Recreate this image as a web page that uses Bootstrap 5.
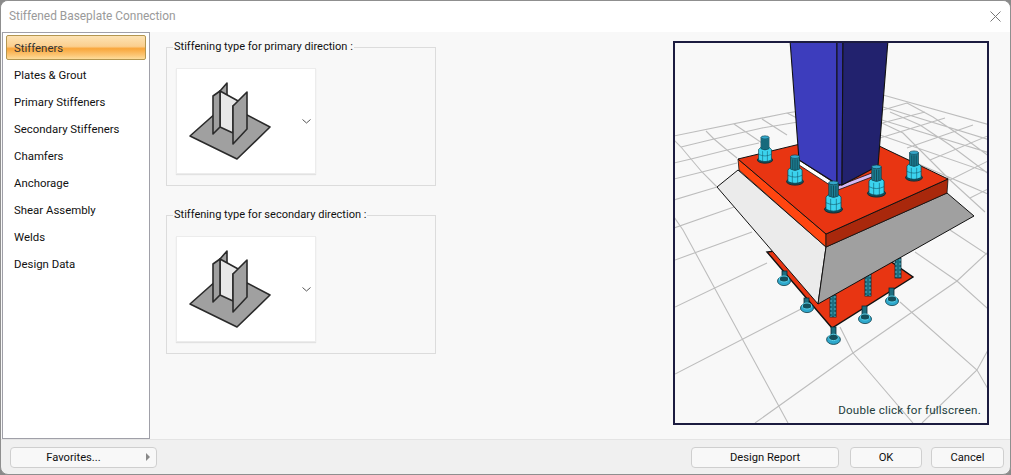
<!DOCTYPE html>
<html lang="en">
<head>
  <meta charset="UTF-8">
  <title>Stiffened Baseplate Connection</title>
  <link href="https://cdn.jsdelivr.net/npm/bootstrap@5.3.0/dist/css/bootstrap.min.css" rel="stylesheet">
  <style>
    html, body { height: 475px; overflow: hidden; background: #8a8a8a; }
    body { font-family: Roboto, "Liberation Sans", sans-serif; font-size: 11.4px; color: #111; }
    .dlg { height: 475px; background: #f0f0f0; border: 1px solid #8f8f8f; border-radius: 8px; overflow: hidden; }
    .dlg-title { height: 31px; background: #fff; padding-left: 8px; color: #9a9a9a; font-size: 11.9px; }
    .dlg-close { width: 30px; }
    .dlg-body { height: 407px; background: #f8f8f8; }
    .side { width: 148px; margin-left: 1px; background: #fff; border: 1px solid #a0a0a8; padding: 2px 3px; }
    .side .list-group-item { height: 25px; margin-bottom: 2px; padding: 0 7px; line-height: 24px; border: 1px solid transparent; background: none; color: #111; border-radius: 2px; }
    .side .list-group-item.active { border-color: #b49650; color: #333; background: linear-gradient(#fde3b4 0%, #fbcf8f 45%, #f9a63b 55%, #fcc878 85%, #fedd9c 100%); }
    .mid { width: 270px; margin-left: 16px; padding-top: 8px; }
    .grp { height: 146px; border: 1px solid #dcdcdc; margin: 0 0 22px; padding: 0 9px; min-inline-size: 0; }
    .grp legend { float: none; width: auto; font-size: 11.05px; margin: 0 0 0 -3px; padding: 0 1px; line-height: 14px; color: #111; }
    .pick { width: 140px; height: 106px; margin-top: 14px; background: #fff; border: 1px solid #ececec; box-shadow: 0 1px 1px #e2e2e2; padding-right: 4px; }
    .view { position: relative; width: 316px; height: 384px; margin: 9px 21px 0 auto; border: 2px solid #1c1c40; background: #f8f8f8; }
    .view svg { display: block; }
    .view-hint { position: absolute; right: 6px; bottom: 6px; color: #223c3c; font-size: 11.6px; line-height: 14px; letter-spacing: .22px; }
    .foot { height: 35px; border-top: 1px solid #e4e4e4; padding: 7px 6px 0 9px; }
    .foot .btn { height: 21px; padding: 0; font-size: 11.2px; line-height: 18px; color: #111; background: #f8f8f8; border: 1px solid #cfcfcf; border-radius: 4px; }
    .foot .btn-fav { width: 147px; padding-right: 20px; }
    .btn-fav i { border-left: 4px solid #888; border-top: 4px solid transparent; border-bottom: 4px solid transparent; right: 6px; top: 5px; position: absolute; }
    .btn-rep { width: 148px; margin-right: 11px; }
    .btn-ok { width: 72px; margin-right: 9px; }
    .btn-can { width: 73px; }
  </style>
</head>
<body>

<svg width="0" height="0" class="position-absolute">
  <symbol id="stiff" viewBox="0 0 106 106">
    <g stroke="#2a2a2a" stroke-width="1.6" stroke-linejoin="round">
      <polygon points="13,68 49,36 93,59 60,91" fill="#a0a0a0"/>
      <polygon points="43,23 50,15 50,36 43,42" fill="#a0a0a0"/>
      <polygon points="43,23 63,34 56,38 56,65 43,59" fill="#e8e8e8"/>
      <polygon points="36,28 43,23 43,59 36,66" fill="#a0a0a0"/>
      <polygon points="56,38 70,24 70,61 56,76" fill="#a0a0a0"/>
    </g>
  </symbol>
  <!-- anchor bolt: nut and stud, origin at base centre -->
  <symbol id="bolt" viewBox="-10 -33 20 36" overflow="visible">
    <ellipse cx="0" cy="-2" rx="9.5" ry="4" fill="#14505c" stroke="#0b2a33"/>
    <path d="M-8-15l3-3h10l3 3v13q-8 4-16 0z" fill="#3bd3ee" stroke="#0e3c48" stroke-width=".8"/>
    <path d="M-8-9q8 4 16 0M-3-13v14M3-13v14" fill="none" stroke="#0e5060" stroke-width=".6"/>
    <path d="M-5-30v14q5 3 10 0v-14z" fill="#1d7f94" stroke="#0e3c48" stroke-width=".8"/>
    <ellipse cx="0" cy="-30" rx="5" ry="2" fill="#35a9cc" stroke="#0e3c48" stroke-width=".7"/>
    <path d="M-2.5-27v11M0-27v12M2.5-27v11" stroke="#0c3540" stroke-width=".7"/>
  </symbol>
  <symbol id="nutlow" viewBox="-8 -6 16 13" overflow="visible">
    <ellipse cx="0" cy="1" rx="6.5" ry="4.6" fill="#2ea8cc" stroke="#0e3c48" stroke-width=".8"/>
    <ellipse cx="0" cy="-1" rx="4.6" ry="3" fill="#14505c" stroke="#5fd8f0" stroke-width=".9"/>
  </symbol>
</svg>

<div class="dlg d-flex flex-column">
  <div class="dlg-title d-flex align-items-center justify-content-between">
    <span>Stiffened Baseplate Connection</span>
    <span class="dlg-close d-flex justify-content-center">
      <svg width="11" height="11" viewBox="0 0 11 11"><path d="M.5.5l10 10M10.5.5l-10 10" stroke="#777" fill="none"/></svg>
    </span>
  </div>

  <div class="dlg-body d-flex">
    <div class="side list-group list-group-flush">
      <div class="list-group-item active">Stiffeners</div>
      <div class="list-group-item">Plates &amp; Grout</div>
      <div class="list-group-item">Primary Stiffeners</div>
      <div class="list-group-item">Secondary Stiffeners</div>
      <div class="list-group-item">Chamfers</div>
      <div class="list-group-item">Anchorage</div>
      <div class="list-group-item">Shear Assembly</div>
      <div class="list-group-item">Welds</div>
      <div class="list-group-item">Design Data</div>
    </div>

    <div class="mid">
      <fieldset class="grp">
        <legend>Stiffening type for primary direction :</legend>
        <div class="pick d-flex align-items-center">
          <svg width="106" height="106"><use href="#stiff"/></svg>
          <svg class="ms-auto" width="9" height="5" viewBox="0 0 9 5"><path d="M.5.5l4 3.5 4-3.5" fill="none" stroke="#555"/></svg>
        </div>
      </fieldset>
      <fieldset class="grp">
        <legend>Stiffening type for secondary direction :</legend>
        <div class="pick d-flex align-items-center">
          <svg width="106" height="106"><use href="#stiff"/></svg>
          <svg class="ms-auto" width="9" height="5" viewBox="0 0 9 5"><path d="M.5.5l4 3.5 4-3.5" fill="none" stroke="#555"/></svg>
        </div>
      </fieldset>
    </div>

    <div class="view">
      <svg width="312" height="380" viewBox="675 43 312 380">
        <path fill="none" stroke="#bdbdbd" stroke-width="1.1" d="
          M674 136L787 113L800 111M681 147L714 139L762 128L798 122M674 163L691 159L727 150L759 143M674 179L702 172L737 163M674 200L717 187M674 228L734 207
          M674 140L681 147L691 159L702 172L717 187M706 131L714 139L727 150L737 158M734 124L762 143M762 119L787 135M787 113L797 118
          M675 260L752 232M675 307L767 263M675 374L803 308
          M755 423L853 353L957 281L988 252M922 423L977 370L988 350
          M674 217L683 230L788 423M840 327L853 353L913 423M900 302L977 370L988 389M915 252L957 281L988 309M950 230L988 255
          M883 95L990 125M883 107L990 140M882 120L990 153M880 135L990 173M879 147L990 195
          M883 110L907 103M882 123L925 112M880 138L945 118M907 148L973 125M930 160L990 135M950 180L990 160M970 198L990 188
          M907 103L933 117L967 140L990 157M890 112L920 125L950 145L990 175M882 123L903 133L930 160L950 180L985 212"/>
        <!-- lower plate -->
        <polygon points="767,252 832,328 913,277 860,240" fill="#e83512" stroke="#111" stroke-width="1.4"/>
        <g fill="#1d6f80" stroke="#0b2a33" stroke-width=".8">
          <rect x="830" y="295" width="6" height="22"/>
          <rect x="865" y="274" width="6" height="22"/>
          <rect x="895" y="258" width="6" height="20"/>
          <rect x="831" y="327" width="5" height="12"/>
          <rect x="862" y="306" width="5" height="13"/>
          <rect x="889" y="288" width="5" height="13"/>
          <rect x="804" y="298" width="5" height="10"/>
          <rect x="782" y="271" width="5" height="9"/>
        </g>
        <path d="M831 296v21M835 296v21M866 275v21M870 275v21M896 259v19M900 259v19" stroke="#5fc8dc" stroke-width=".8" stroke-dasharray="2 2" fill="none"/>
        <use href="#nutlow" x="825" y="332" width="17" height="14"/>
        <use href="#nutlow" x="857" y="312" width="16" height="13"/>
        <use href="#nutlow" x="884" y="294" width="16" height="13"/>
        <use href="#nutlow" x="799" y="301" width="16" height="13"/>
        <use href="#nutlow" x="776" y="274" width="16" height="13"/>
        <!-- grout -->
        <polygon points="738,170 717,187 818,304 826,247" fill="#ebebeb" stroke="#111"/>
        <polygon points="826,247 818,304 974,216 947,193" fill="#a0a0a0" stroke="#111"/>
        <!-- base plate -->
        <polygon points="738,159 739,170 826,247 826,234" fill="#ff4510" stroke="#111" stroke-width=".8"/>
        <polygon points="826,234 826,247 947,193 948,179" fill="#a9280c" stroke="#111" stroke-width=".8"/>
        <polygon points="738,159 850,132 948,179 826,234" fill="#e83512" stroke="#111"/>
        <!-- shim under column -->
        <polygon points="799,160 836,184 836,189 796,163" fill="#fff" stroke="#111" stroke-width=".8"/>
        <polygon points="838,186 877,171 877,175 838,190" fill="#d6b8f4" stroke="#111" stroke-width=".8"/>
        <!-- column -->
        <polygon points="790,40 837,40 837,184 799,160" fill="#3d3dbd" stroke="#111" stroke-width="1.1"/>
        <polygon points="837,40 843,40 842,185 837,184" fill="#3434a8" stroke="#111" stroke-width="1"/>
        <polygon points="843,40 888,40 878,166 842,185" fill="#22226e" stroke="#111" stroke-width="1.1"/>
        <!-- top bolts -->
        <use href="#bolt" x="756" y="135" width="18" height="29"/>
        <use href="#bolt" x="786" y="154" width="18" height="32"/>
        <use href="#bolt" x="824" y="180" width="19" height="34"/>
        <use href="#bolt" x="867" y="164" width="19" height="34"/>
        <use href="#bolt" x="905" y="150" width="18" height="32"/>
      </svg>
      <span class="view-hint">Double click for fullscreen.</span>
    </div>
  </div>

  <div class="foot d-flex">
    <button class="btn btn-fav position-relative me-auto">Favorites...<i></i></button>
    <button class="btn btn-rep">Design Report</button>
    <button class="btn btn-ok">OK</button>
    <button class="btn btn-can">Cancel</button>
  </div>
</div>

<script src="https://cdn.jsdelivr.net/npm/bootstrap@5.3.0/dist/js/bootstrap.bundle.min.js"></script>
</body>
</html>
